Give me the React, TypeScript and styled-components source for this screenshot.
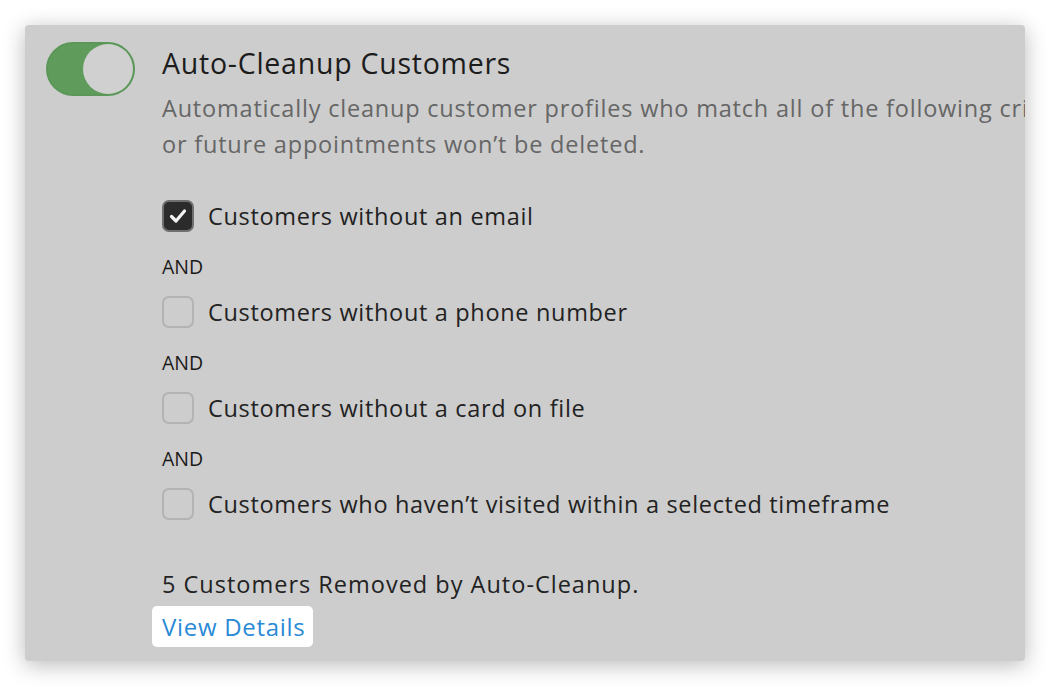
import React from "react";
import styled, { createGlobalStyle } from "styled-components";

const GlobalStyle = createGlobalStyle`
  html, body {
    margin: 0;
    padding: 0;
    background: #ffffff;
  }
  body {
    font-family: "Open Sans", "Liberation Sans", sans-serif;
  }
`;

const Page = styled.div`
  width: 1050px;
  height: 687px;
  padding: 25px;
  box-sizing: border-box;
  overflow: hidden;
`;

const Panel = styled.div`
  width: 1000px;
  height: 636px;
  background: #cdcdcd;
  border-radius: 4px;
  box-shadow: 0 4px 22px rgba(0, 0, 0, 0.28);
  overflow: hidden;
  display: flex;
  gap: 27px;
  padding: 17px 0 0 21px;
  box-sizing: border-box;
`;

const Toggle = styled.div`
  flex: 0 0 auto;
  width: 89px;
  height: 54px;
  border-radius: 27px;
  background: #5f9c5c;
  border: 2px solid #5a9758;
  box-sizing: border-box;
  display: flex;
  justify-content: flex-end;
`;

const Knob = styled.div`
  width: 50px;
  height: 50px;
  border-radius: 50%;
  background: #d0d0d0;
`;

const Content = styled.div`
  display: flex;
  flex-direction: column;
  white-space: nowrap;
  color: #222222;
`;

const Title = styled.div`
  font-size: 28.5px;
  letter-spacing: 0.75px;
  line-height: 40px;
  margin: 1px 0 7px;
  color: #1c1c1c;
`;

const Description = styled.div`
  font-size: 23.5px;
  letter-spacing: 0.8px;
  line-height: 36px;
  color: #666666;
  margin-bottom: 34px;
`;

const CriteriaList = styled.div`
  display: flex;
  flex-direction: column;
`;

const Criterion = styled.label`
  display: flex;
  align-items: center;
  gap: 14px;
  height: 40px;
  font-size: 23.5px;
  letter-spacing: 0.67px;
`;

const Box = styled.span<{ checked: boolean }>`
  flex: 0 0 auto;
  width: 32px;
  height: 32px;
  box-sizing: border-box;
  border-radius: 7px;
  border: 2px solid ${p => (p.checked ? "#6f6f6f" : "#b3b3b3")};
  background: ${p => (p.checked ? "#2b2b2b" : "transparent")};
  display: flex;
  align-items: center;
  justify-content: center;
`;

const AndLabel = styled.div`
  font-size: 19.5px;
  padding-top: 6px;
  line-height: 50px;
  color: #1a1a1a;
  font-weight: 500;
`;

const Summary = styled.div`
  font-size: 23.5px;
  letter-spacing: 1px;
  line-height: 30px;
  margin-top: 45px;
`;

const DetailsLink = styled.a`
  align-self: flex-start;
  margin-left: -10px;
  margin-top: 7px;
  padding: 0 8px 0 10px;
  height: 41px;
  line-height: 41px;
  background: #ffffff;
  border-radius: 5px;
  color: #2a8ad6;
  font-size: 24px;
  letter-spacing: 0.7px;
  text-decoration: none;
`;

const Check = () => (
  <svg width="20" height="20" viewBox="0 0 20 20">
    <path d="M3.5 10.5 L8 15 L16.5 5" fill="none" stroke="#f2f2f2" strokeWidth="3.2" strokeLinecap="round" strokeLinejoin="round" />
  </svg>
);

const criteria = [
  { label: "Customers without an email", checked: true },
  { label: "Customers without a phone number", checked: false },
  { label: "Customers without a card on file", checked: false },
  { label: "Customers who haven\u2019t visited within a selected timeframe", checked: false },
];

export default function App() {
  return (
    <Page>
      <GlobalStyle />
      <Panel>
        <Toggle>
          <Knob />
        </Toggle>
        <Content>
          <Title>Auto-Cleanup Customers</Title>
          <Description>
            Automatically cleanup customer profiles who match all of the following criteria. Customers with past
            <br />
            or future appointments won’t be deleted.
          </Description>
          <CriteriaList>
            {criteria.map((c, i) => (
              <React.Fragment key={c.label}>
                {i > 0 && <AndLabel>AND</AndLabel>}
                <Criterion>
                  <Box checked={c.checked}>{c.checked && <Check />}</Box>
                  {c.label}
                </Criterion>
              </React.Fragment>
            ))}
          </CriteriaList>
          <Summary>5 Customers Removed by Auto-Cleanup.</Summary>
          <DetailsLink href="#">View Details</DetailsLink>
        </Content>
      </Panel>
    </Page>
  );
}
